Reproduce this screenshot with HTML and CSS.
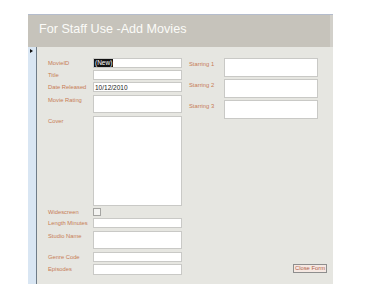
FILE: index.html
```html
<!DOCTYPE html>
<html lang="en">
<head>
    <meta charset="UTF-8">
    <meta name="viewport" content="width=device-width, initial-scale=1.0">
    <title>Add Movies</title>
    <link rel="stylesheet" href="styles.css">
</head>
<body>
    <div class="form">
        <div class="header">
            <h1>For Staff Use -Add Movies</h1>
        </div>
        <div class="body">
            <div class="selector"><span class="arrow"></span></div>
            <div class="content">
                <div class="leftCol">
                    <div class="row r12"><label>MovieID</label><div class="field h10"><span class="newTag">(New)</span></div></div>
                    <div class="row r12"><label>Title</label><div class="field h10"></div></div>
                    <div class="row r13"><label>Date Released</label><div class="field h10"><span class="value">10/12/2010</span></div></div>
                    <div class="row r21"><label>Movie Rating</label><div class="field h18"></div></div>
                    <div class="row r91"><label>Cover</label><div class="field h90"></div></div>
                    <div class="row r11"><label>Widescreen</label><div class="check"></div></div>
                    <div class="row r13"><label>Length Minutes</label><div class="field h10"></div></div>
                    <div class="row r21"><label>Studio Name</label><div class="field h18"></div></div>
                    <div class="row r12"><label>Genre Code</label><div class="field h10"></div></div>
                    <div class="row r11"><label>Episodes</label><div class="field h11"></div></div>
                </div>
                <div class="rightCol">
                    <div class="row r21"><label>Starring 1</label><div class="field h19 wide"></div></div>
                    <div class="row r21"><label>Starring 2</label><div class="field h19 wide"></div></div>
                    <div class="row r21"><label>Starring 3</label><div class="field h19 wide"></div></div>
                    <button class="closeBtn">Close Form</button>
                </div>
            </div>
        </div>
    </div>
</body>
</html>
```

FILE: styles.css
```css
body { margin: 0; background: #fff; font-family: "Liberation Sans", Arial, sans-serif; }

.form {
    margin: 14px 0 0 28px;
    width: 305px;
    height: 270px;
    display: flex;
    flex-direction: column;
    border-top: 1px solid #b4bccc;
    box-sizing: border-box;
}

.header {
    height: 32px;
    background: #c6c3bb;
    border-right: 3px solid #d2d0ca;
    display: flex;
    align-items: center;
    padding-left: 11px;
}
.header h1 {
    margin: 0 0 4px 0;
    font-weight: normal;
    font-size: 12.6px;
    color: #fbfbf8;
}

.body { flex: 1; display: flex; background: #e6e6e1; }

.selector {
    width: 8px;
    background: #d9e6f3;
    border-right: 1px solid #6f7c88;
    position: relative;
}
.arrow {
    position: absolute; top: 2px; left: 2px;
    width: 0; height: 0;
    border-top: 2.5px solid transparent;
    border-bottom: 2.5px solid transparent;
    border-left: 3px solid #111;
}

.content { flex: 1; display: flex; padding: 11px 6px 0 11px; gap: 7px; }

.leftCol, .rightCol { display: flex; flex-direction: column; }
.rightCol { flex: 1; }

.row { display: flex; align-items: flex-start; }
.r11 { height: 11px; } .r12 { height: 12px; } .r13 { height: 13px; }
.r21 { height: 21px; } .r91 { height: 91px; }

label {
    font-size: 5.8px;
    color: #c67c55;
    width: 45px;
    padding-top: 2px;
}
.rightCol label { width: 35px; padding-top: 3px; }

.field {
    width: 89px;
    box-sizing: border-box;
    background: #fff;
    border: 1px solid #c9c9c6;
    display: flex;
    align-items: center;
}
.field.wide { width: 94px; }
.h10 { height: 10px; } .h11 { height: 11px; } .h18 { height: 18px; }
.h19 { height: 19px; } .h90 { height: 90px; }

.newTag {
    background: #111;
    color: #fff;
    font-size: 6.5px;
    line-height: 8px;
    padding: 0 1px;
}
.value { font-size: 6.5px; color: #222; padding-left: 1px; }

.check {
    width: 6px; height: 6px;
    margin-top: 1px;
    border: 1px solid #a5a5a2;
    background: #f4f4f2;
}

.closeBtn {
    margin-top: auto;
    margin-bottom: 11px;
    align-self: flex-end;
    font-family: "Liberation Sans", Arial, sans-serif;
    font-size: 5.8px;
    color: #b0604a;
    background: #f5e8e2;
    border: 1px solid #8e8e8e;
    width: 34px;
    height: 9px;
    padding: 0;
    line-height: 7px;
}
```
